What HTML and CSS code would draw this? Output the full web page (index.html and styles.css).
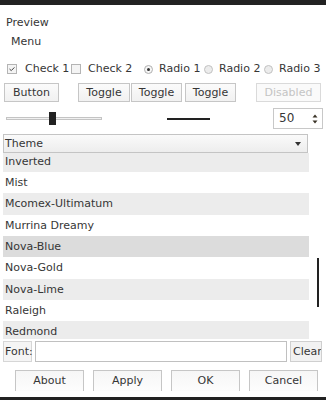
FILE: index.html
```html
<!DOCTYPE html>
<html>
<head>
<meta charset="utf-8">
<link rel="stylesheet" href="styles.css">
</head>
<body>
<div class="app">
  <div class="topbar"></div>
  <div class="title">Preview</div>
  <div class="menu">Menu</div>
  <div class="checks">
    <div class="opt o1"><span class="cbox"><svg width="10" height="10" viewBox="0 0 10 10"><path d="M2.5 5 L4.3 6.6 L7.4 3.4" fill="none" stroke="#444" stroke-width="1"/></svg></span><span class="lbl l1">Check 1</span></div>
    <div class="opt o2"><span class="cbox"></span><span class="lbl l2">Check 2</span></div>
    <div class="opt o3"><span class="radio on"><span class="dot"></span></span><span class="lbl l3">Radio 1</span></div>
    <div class="opt o4"><span class="radio"></span><span class="lbl l3">Radio 2</span></div>
    <div class="opt o5"><span class="radio"></span><span class="lbl l3">Radio 3</span></div>
  </div>
  <div class="btnrow">
    <div class="btn b-button">Button</div>
    <div class="btn b-t1">Toggle</div>
    <div class="btn b-t2">Toggle</div>
    <div class="btn b-t3">Toggle</div>
    <div class="btn b-dis">Disabled</div>
  </div>
  <div class="sliderrow">
    <div class="slider"><div class="track"></div><div class="handle"></div></div>
    <div class="progress"></div>
    <div class="spin"><span class="spinval">50</span><span class="arrows"><svg width="6" height="12" viewBox="0 0 6 12"><path d="M3 1.5 L5.5 4.5 L0.5 4.5 Z" fill="#3a3326"/><path d="M3 10.5 L5.5 7.5 L0.5 7.5 Z" fill="#3a3326"/></svg></span></div>
  </div>
  <div class="combo"><span class="combotext">Theme</span><svg class="carrow" width="6" height="4" viewBox="0 0 6 4"><path d="M0 0 L6 0 L3 4 Z" fill="#333"/></svg></div>
  <div class="listwrap">
    <div class="listview">
      <div class="listinner">
        <div class="row alt">Inverted</div>
        <div class="row">Mist</div>
        <div class="row alt">Mcomex-Ultimatum</div>
        <div class="row">Murrina Dreamy</div>
        <div class="row sel">Nova-Blue</div>
        <div class="row">Nova-Gold</div>
        <div class="row alt">Nova-Lime</div>
        <div class="row">Raleigh</div>
        <div class="row alt">Redmond</div>
      </div>
    </div>
    <div class="scrollcol"><div class="thumb"></div></div>
  </div>
  <div class="fontrow">
    <div class="fontlbl">Font:</div>
    <div class="entry"></div>
    <div class="clear">Clear</div>
  </div>
  <div class="bottombtns">
    <div class="bbtn">About</div>
    <div class="bbtn">Apply</div>
    <div class="bbtn">OK</div>
    <div class="bbtn">Cancel</div>
  </div>
  <div class="bottombar"></div>
</div>
</body>
</html>
```
FILE: styles.css
```css
html, body {
  margin: 0;
  padding: 0;
  background: #ffffff;
}
body {
  width: 326px;
  height: 400px;
  overflow: hidden;
  font-family: "DejaVu Sans", "Liberation Sans", sans-serif;
  font-size: 11px;
  color: #363636;
}
.app {
  width: 326px;
  height: 400px;
  display: flex;
  flex-direction: column;
}
.topbar {
  height: 5px;
  background: #222222;
  flex: none;
}
.title {
  padding-top: 11px;
  padding-left: 6px;
  height: 14px;
  line-height: 14px;
  flex: none;
}
.menu {
  margin-top: 5px;
  padding-left: 11px;
  height: 14px;
  line-height: 14px;
  flex: none;
}
.checks {
  margin-top: 12px;
  height: 16px;
  display: flex;
  align-items: center;
  padding-left: 7px;
  flex: none;
}
.opt {
  display: flex;
  align-items: center;
  height: 16px;
  flex: none;
}
.o1 { width: 64px; }
.o2 { width: 73px; }
.o3, .o4 { width: 60px; }
.o5 { width: 60px; }
.lbl {
  line-height: 16px;
  white-space: nowrap;
}
.l1 { margin-left: 8px; }
.l2 { margin-left: 7px; }
.l3 { margin-left: 6px; }
.cbox {
  width: 10px;
  height: 10px;
  box-sizing: border-box;
  border: 1px solid #b4b4b4;
  background: #f4f4f4;
  display: flex;
  align-items: center;
  justify-content: center;
  overflow: hidden;
}
.cbox svg { flex: none; }
.radio {
  width: 9px;
  height: 9px;
  box-sizing: border-box;
  border: 1px solid #c2c2c2;
  border-radius: 50%;
  background: #ececec;
  display: flex;
  align-items: center;
  justify-content: center;
}
.radio.on { background: #f6f6f6; border-color: #b0b0b0; }
.dot {
  width: 3px;
  height: 3px;
  border-radius: 50%;
  background: #333;
}
.btnrow {
  margin-top: 6px;
  height: 19px;
  display: flex;
  flex: none;
}
.btn {
  box-sizing: border-box;
  height: 19px;
  border: 1px solid #c6c6c6;
  background: linear-gradient(#fbfbfb, #f1f1f1);
  text-align: center;
  line-height: 17px;
  white-space: nowrap;
  overflow: hidden;
}
.b-button { margin-left: 4px; width: 55px; }
.b-t1 { margin-left: 19px; width: 52px; }
.b-t2 { margin-left: 1px; width: 51px; }
.b-t3 { margin-left: 3px; width: 51px; }
.b-dis { margin-left: 20px; width: 65px; color: #c4c4c4; border-color: #dadada; background: #fafafa; }
.sliderrow {
  margin-top: 6px;
  height: 21px;
  display: flex;
  align-items: center;
  flex: none;
}
.slider {
  position: relative;
  margin-left: 6px;
  width: 96px;
  height: 21px;
  display: flex;
  align-items: center;
}
.track {
  width: 96px;
  height: 3px;
  box-sizing: border-box;
  border: 1px solid #c4c4c4;
  background: #f0f0f0;
}
.handle {
  position: absolute;
  left: 43px;
  top: 4px;
  width: 7px;
  height: 13px;
  background: #222222;
}
.progress {
  margin-left: 65px;
  width: 43px;
  height: 2px;
  background: #222222;
  margin-top: 1px;
}
.spin {
  margin-left: auto;
  margin-right: 3px;
  width: 50px;
  height: 21px;
  box-sizing: border-box;
  border: 1px solid #c8c8c8;
  display: flex;
  align-items: center;
}
.spinval {
  margin-left: 5px;
  font-size: 12px;
  line-height: 19px;
}
.arrows {
  margin-left: auto;
  margin-right: 4px;
  display: flex;
}
.combo {
  margin-top: 5px;
  margin-left: 3px;
  width: 305px;
  height: 19px;
  box-sizing: border-box;
  border: 1px solid #c4c4c4;
  background: linear-gradient(#fafafa, #ededed);
  display: flex;
  align-items: center;
  flex: none;
}
.combotext {
  margin-left: 1px;
  line-height: 17px;
}
.carrow {
  margin-left: auto;
  margin-right: 6px;
}
.listwrap {
  height: 186px;
  display: flex;
  flex: none;
}
.listview {
  margin-left: 3px;
  width: 306px;
  height: 186px;
  overflow: hidden;
}
.listinner {
  margin-top: -2.4px;
}
.row {
  height: 21.35px;
  line-height: 21px;
  padding-left: 2px;
  white-space: nowrap;
}
.row.alt { background: #ececec; }
.row.sel { background: #dcdcdc; }
.scrollcol {
  margin-left: 8px;
  width: 2px;
}
.thumb {
  margin-top: 105px;
  width: 2px;
  height: 49px;
  background: #222222;
}
.fontrow {
  margin-top: 2px;
  height: 21px;
  display: flex;
  flex: none;
}
.fontlbl {
  margin-left: 3px;
  width: 29px;
  height: 21px;
  box-sizing: border-box;
  border: 1px solid #d6d6d6;
  background: #f5f5f5;
  line-height: 19px;
  padding-left: 1px;
}
.entry {
  margin-left: 3px;
  width: 252px;
  height: 21px;
  box-sizing: border-box;
  border: 1px solid #c0c0c0;
  background: #fff;
}
.clear {
  margin-left: 3px;
  width: 32px;
  height: 21px;
  box-sizing: border-box;
  border: 1px solid #cfcfcf;
  background: #f2f2f2;
  line-height: 19px;
  padding-left: 2px;
  overflow: hidden;
}
.bottombtns {
  margin-top: 8px;
  height: 21px;
  display: flex;
  gap: 9px;
  padding-left: 15px;
  flex: none;
}
.bbtn {
  width: 69px;
  height: 21px;
  box-sizing: border-box;
  border: 1px solid #c6c6c6;
  border-bottom: none;
  background: linear-gradient(#f6f6f6, #fdfdfd);
  text-align: center;
  line-height: 20px;
}
.bottombar {
  margin-top: auto;
  height: 3px;
  background: #222222;
  flex: none;
}
```
